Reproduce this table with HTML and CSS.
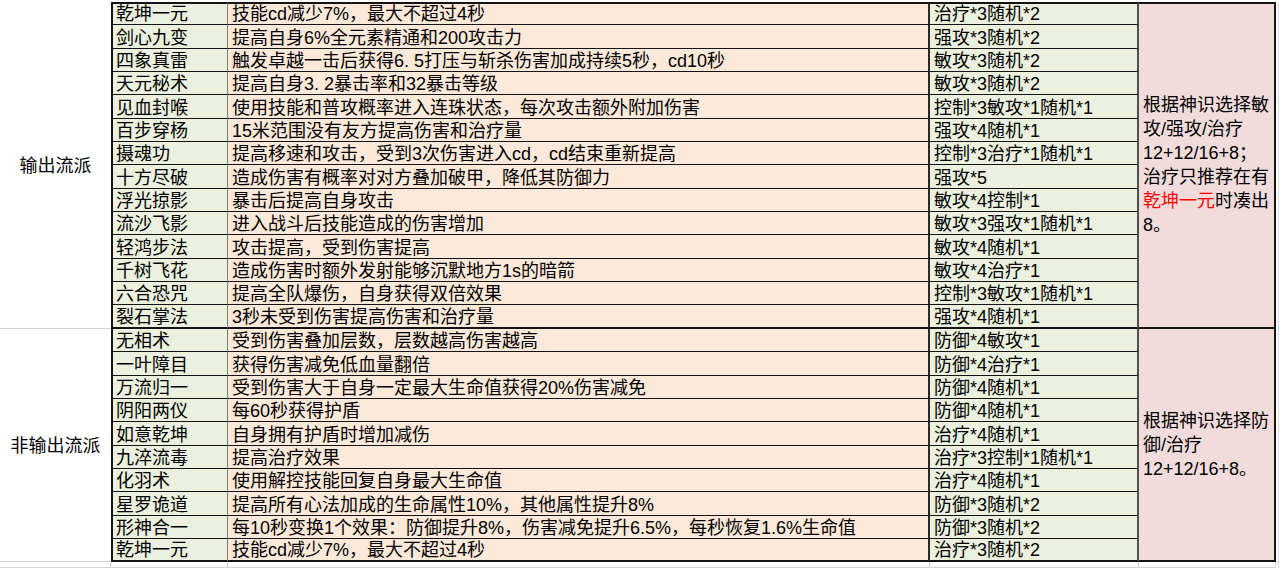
FILE: index.html
```html
<!DOCTYPE html>
<html lang="zh-CN">
<head>
<meta charset="utf-8">
<title>心法推荐</title>
<link rel="stylesheet" href="styles.css">
</head>
<body>
<div class="sheet">
  <div class="grp grp-1">输出流派</div>
  <div class="note note-1"><div class="note-text">根据神识选择敏<br>攻/强攻/治疗<br>12+12/16+8；<br>治疗只推荐在有<br><span class="red">乾坤一元</span>时凑出<br>8。</div></div>
  <div class="grp grp-2">非输出流派</div>
  <div class="note note-2"><div class="note-text">根据神识选择防<br>御/治疗<br>12+12/16+8。</div></div>

  <div class="c name first">乾坤一元</div><div class="c desc first">技能cd减少7%，最大不超过4秒</div><div class="c tag first">治疗*3随机*2</div>
  <div class="c name">剑心九变</div><div class="c desc">提高自身6%全元素精通和200攻击力</div><div class="c tag">强攻*3随机*2</div>
  <div class="c name">四象真雷</div><div class="c desc">触发卓越一击后获得6. 5打压与斩杀伤害加成持续5秒，cd10秒</div><div class="c tag">敏攻*3随机*2</div>
  <div class="c name">天元秘术</div><div class="c desc">提高自身3. 2暴击率和32暴击等级</div><div class="c tag">敏攻*3随机*2</div>
  <div class="c name">见血封喉</div><div class="c desc">使用技能和普攻概率进入连珠状态，每次攻击额外附加伤害</div><div class="c tag">控制*3敏攻*1随机*1</div>
  <div class="c name">百步穿杨</div><div class="c desc">15米范围没有友方提高伤害和治疗量</div><div class="c tag">强攻*4随机*1</div>
  <div class="c name">摄魂功</div><div class="c desc">提高移速和攻击，受到3次伤害进入cd，cd结束重新提高</div><div class="c tag">控制*3治疗*1随机*1</div>
  <div class="c name">十方尽破</div><div class="c desc">造成伤害有概率对对方叠加破甲，降低其防御力</div><div class="c tag">强攻*5</div>
  <div class="c name">浮光掠影</div><div class="c desc">暴击后提高自身攻击</div><div class="c tag">敏攻*4控制*1</div>
  <div class="c name">流沙飞影</div><div class="c desc">进入战斗后技能造成的伤害增加</div><div class="c tag">敏攻*3强攻*1随机*1</div>
  <div class="c name">轻鸿步法</div><div class="c desc">攻击提高，受到伤害提高</div><div class="c tag">敏攻*4随机*1</div>
  <div class="c name">千树飞花</div><div class="c desc">造成伤害时额外发射能够沉默地方1s的暗箭</div><div class="c tag">敏攻*4治疗*1</div>
  <div class="c name">六合恐咒</div><div class="c desc">提高全队爆伤，自身获得双倍效果</div><div class="c tag">控制*3敏攻*1随机*1</div>
  <div class="c name last">裂石掌法</div><div class="c desc last">3秒未受到伤害提高伤害和治疗量</div><div class="c tag last">强攻*4随机*1</div>

  <div class="c name">无相术</div><div class="c desc">受到伤害叠加层数，层数越高伤害越高</div><div class="c tag">防御*4敏攻*1</div>
  <div class="c name">一叶障目</div><div class="c desc">获得伤害减免低血量翻倍</div><div class="c tag">防御*4治疗*1</div>
  <div class="c name">万流归一</div><div class="c desc">受到伤害大于自身一定最大生命值获得20%伤害减免</div><div class="c tag">防御*4随机*1</div>
  <div class="c name">阴阳两仪</div><div class="c desc">每60秒获得护盾</div><div class="c tag">防御*4随机*1</div>
  <div class="c name">如意乾坤</div><div class="c desc">自身拥有护盾时增加减伤</div><div class="c tag">治疗*4随机*1</div>
  <div class="c name">九淬流毒</div><div class="c desc">提高治疗效果</div><div class="c tag">治疗*3控制*1随机*1</div>
  <div class="c name">化羽术</div><div class="c desc">使用解控技能回复自身最大生命值</div><div class="c tag">治疗*4随机*1</div>
  <div class="c name">星罗诡道</div><div class="c desc">提高所有心法加成的生命属性10%，其他属性提升8%</div><div class="c tag">防御*3随机*2</div>
  <div class="c name">形神合一</div><div class="c desc">每10秒变换1个效果：防御提升8%，伤害减免提升6.5%，每秒恢复1.6%生命值</div><div class="c tag">防御*3随机*2</div>
  <div class="c name last">乾坤一元</div><div class="c desc last">技能cd减少7%，最大不超过4秒</div><div class="c tag last">治疗*3随机*2</div>

  <div class="fill f1"></div><div class="fill f2"></div><div class="fill f3"></div><div class="fill f4"></div><div class="fill f5"></div>
  <div class="edge"></div>
</div>
</body>
</html>
```

FILE: styles.css
```css
* { box-sizing: border-box; }
html, body { margin: 0; padding: 0; background: #ffffff; }
body {
  font-family: "Liberation Sans", "Noto Sans CJK SC", sans-serif;
  font-size: 18px;
  color: #000000;
}
.sheet {
  width: 1280px;
  height: 568px;
  overflow: hidden;
  display: grid;
  grid-template-columns: 111px 117px 702px 209px 137px 1fr;
  grid-template-rows: repeat(24, 23.35px) 1fr;
  padding-top: 2px;
  background: #ffffff;
}
.c {
  display: flex;
  align-items: flex-end;
  line-height: 20px;
  padding-bottom: 0;
  white-space: nowrap;
  overflow: hidden;
  border-bottom: 1px solid #141414;
}
.c.first { border-top: 2px solid #141414; }
.c.last { border-bottom: 2px solid #141414; }
.name {
  grid-column: 2;
  background: #ebf1de;
  border-left: 2px solid #141414;
  border-right: 1px solid #7c7f78;
  padding-left: 3px;
}
.desc {
  grid-column: 3;
  background: #fde9d9;
  border-right: 2px solid #2a2a2a;
  padding-left: 4px;
}
.tag {
  grid-column: 4;
  background: #ebf1de;
  border-right: 2px solid #505050;
  padding-left: 4px;
}
.grp {
  grid-column: 1;
  display: flex;
  align-items: center;
  justify-content: center;
  border-bottom: 1px solid #d4d4d4;
  padding-bottom: 2px;
}
.grp-1 { grid-row: 1 / span 14; }
.grp-2 { grid-row: 15 / span 10; }
.note {
  grid-column: 5;
  background: #f2dcdb;
  border-right: 2px solid #141414;
  border-bottom: 2px solid #141414;
  padding-left: 4px;
  display: flex;
  align-items: center;
}
.note-text {
  line-height: 24px;
  white-space: nowrap;
}
.note-1 { grid-row: 1 / span 14; border-top: 2px solid #141414; }
.note-2 { grid-row: 15 / span 10; }
.red { color: #ff0000; }
.fill {
  grid-row: 25;
  border-right: 1px solid #d4d4d4;
  border-bottom: 1px solid #d4d4d4;
}
.f1 { grid-column: 1; }
.f2 { grid-column: 2; }
.f3 { grid-column: 3; }
.f4 { grid-column: 4; }
.f5 { grid-column: 5; }
.edge {
  grid-column: 6;
  grid-row: 1 / -1;
  background: linear-gradient(to right, transparent 2px, #d9d9d9 2px, #d9d9d9 3px, transparent 3px);
}
```
